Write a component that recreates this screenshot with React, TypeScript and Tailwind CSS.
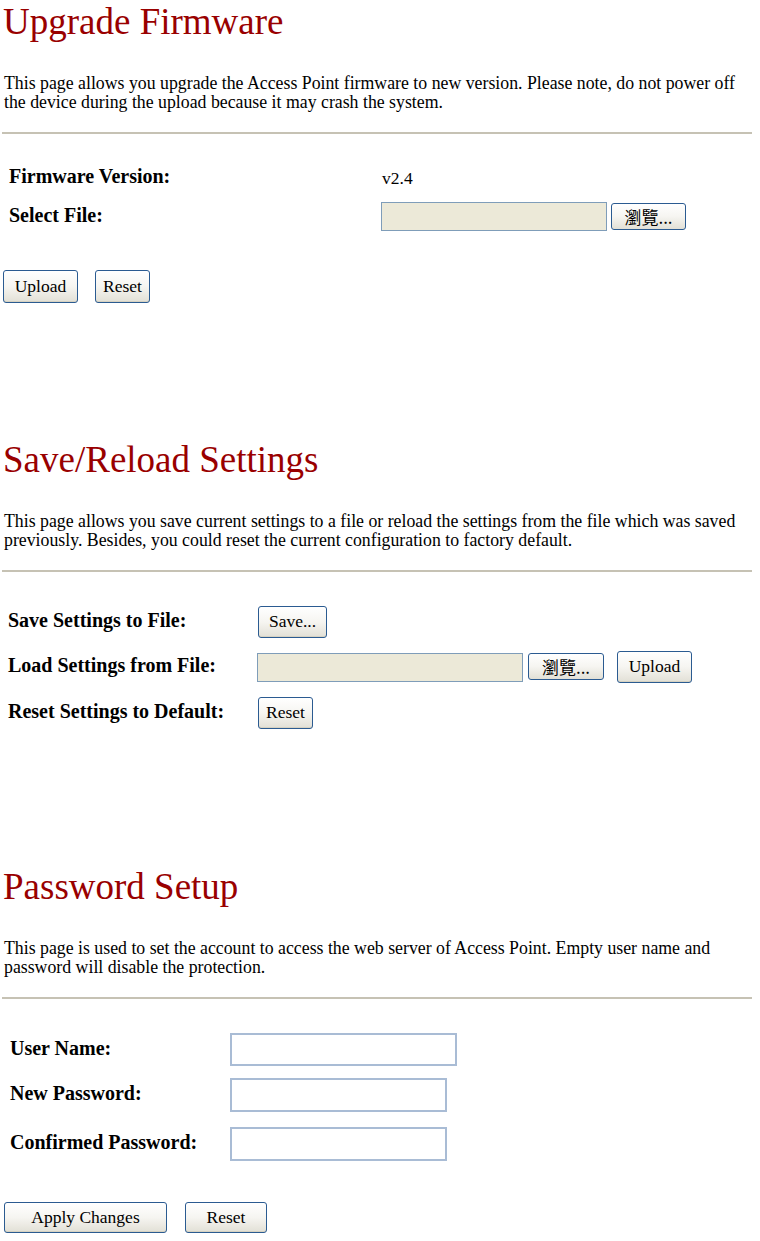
import React from "react";

const serif = "font-['Liberation_Serif','Noto_Sans_CJK_TC',serif]";

function Btn({ w, h = 32, children }: { w: number; h?: number; children: React.ReactNode }) {
  return (
    <button
      type="button"
      style={{ width: w, height: h }}
      className={`${serif} shrink-0 rounded-[3px] border border-[#2b5b91] bg-gradient-to-b from-white via-[#f6f5f1] to-[#e2e0d6] text-[17.5px] leading-none text-black shadow-[inset_0_-1px_0_#d6d2c2]`}
    >
      {children}
    </button>
  );
}

function Browse({ w = 75, h = 27 }: { w?: number; h?: number }) {
  return (
    <button
      type="button"
      style={{ width: w, height: h }}
      className="shrink-0 rounded-[3px] border border-[#2b5b91] bg-gradient-to-b from-white via-[#f6f5f1] to-[#e2e0d6] font-['Noto_Sans_CJK_TC','Liberation_Serif',serif] text-[17px] leading-none text-black"
    >
      瀏覽...
    </button>
  );
}

function Title({ children }: { children: React.ReactNode }) {
  return <div className={`${serif} h-[40px] pl-[3px] pt-[2px] text-[37px] leading-[40px] text-[#990000]`}>{children}</div>;
}

function Para({ children }: { children: React.ReactNode }) {
  return <p className={`${serif} mt-[34px] w-[748px] pl-[4px] text-[17.8px] leading-[19px] text-black`}>{children}</p>;
}

function Rule() {
  return <div className="ml-[2px] mt-[20px] h-[2px] w-[750px] bg-[#c6c2b4]" />;
}

function Label({ children }: { children: React.ReactNode }) {
  return <span className={`${serif} text-[20px] font-bold leading-none text-black`}>{children}</span>;
}

export default function App() {
  return (
    <div className={`${serif} w-[760px] min-h-[1241px] bg-white`}>
      {/* Upgrade Firmware */}
      <Title>Upgrade Firmware</Title>
      <Para>
        This page allows you upgrade the Access Point firmware to new version. Please note, do not power off the device during
        the upload because it may crash the system.
      </Para>
      <Rule />
      <div className="mt-[29px] flex h-[30px] items-center">
        <div className="w-[381px] pl-[9px]">
          <Label>Firmware Version:</Label>
        </div>
        <span className="pl-[1px] text-[17.5px] text-black">v2.4</span>
      </div>
      <div className="mt-[8px] flex h-[31px] items-center">
        <div className="w-[381px] pl-[9px]">
          <Label>Select File:</Label>
        </div>
        <div className="flex items-center gap-[4px]">
          <div className="h-[29px] w-[226px] border border-[#7f9db9] bg-[#ece9d8]" />
          <Browse />
        </div>
      </div>
      <div className="mt-[38px] flex items-center gap-[17px] pl-[3px]">
        <Btn w={75} h={33}>Upload</Btn>
        <Btn w={55} h={33}>Reset</Btn>
      </div>

      {/* Save/Reload Settings */}
      <div className="mt-[135px]">
        <Title>Save/Reload Settings</Title>
      </div>
      <Para>
        This page allows you save current settings to a file or reload the settings from the file which was saved previously.
        Besides, you could reset the current configuration to factory default.
      </Para>
      <Rule />
      <div className="mt-[34px] flex h-[32px] items-center">
        <div className="w-[258px] pl-[8px]">
          <Label>Save Settings to File:</Label>
        </div>
        <Btn w={69} h={32}>Save...</Btn>
      </div>
      <div className="mt-[13px] flex h-[32px] items-center">
        <div className="w-[257px] pl-[8px]">
          <Label>Load Settings from File:</Label>
        </div>
        <div className="h-[29px] w-[266px] border border-[#7f9db9] bg-[#ece9d8]" />
        <div className="ml-[5px]">
          <Browse w={76} h={27} />
        </div>
        <div className="ml-[13px]">
          <Btn w={75} h={32}>Upload</Btn>
        </div>
      </div>
      <div className="mt-[14px] flex h-[32px] items-center">
        <div className="w-[258px] pl-[8px]">
          <Label>Reset Settings to Default:</Label>
        </div>
        <Btn w={55} h={32}>Reset</Btn>
      </div>

      {/* Password Setup */}
      <div className="mt-[136px]">
        <Title>Password Setup</Title>
      </div>
      <Para>
        This page is used to set the account to access the web server of Access Point. Empty user name and password will
        disable the protection.
      </Para>
      <Rule />
      <div className="mt-[34px] flex h-[33px] items-center">
        <div className="w-[230px] pl-[10px]">
          <Label>User Name:</Label>
        </div>
        <div className="h-[33px] w-[227px] border-2 border-[#a9bcd5] bg-white" />
      </div>
      <div className="mt-[12px] flex h-[34px] items-center">
        <div className="w-[230px] pl-[10px]">
          <Label>New Password:</Label>
        </div>
        <div className="h-[34px] w-[217px] border-2 border-[#a9bcd5] bg-white" />
      </div>
      <div className="mt-[15px] flex h-[34px] items-center">
        <div className="w-[230px] pl-[10px]">
          <Label>Confirmed Password:</Label>
        </div>
        <div className="h-[34px] w-[217px] border-2 border-[#a9bcd5] bg-white" />
      </div>
      <div className="mt-[41px] flex items-center gap-[18px] pl-[4px]">
        <Btn w={163} h={31}>Apply Changes</Btn>
        <Btn w={82} h={31}>Reset</Btn>
      </div>
    </div>
  );
}
